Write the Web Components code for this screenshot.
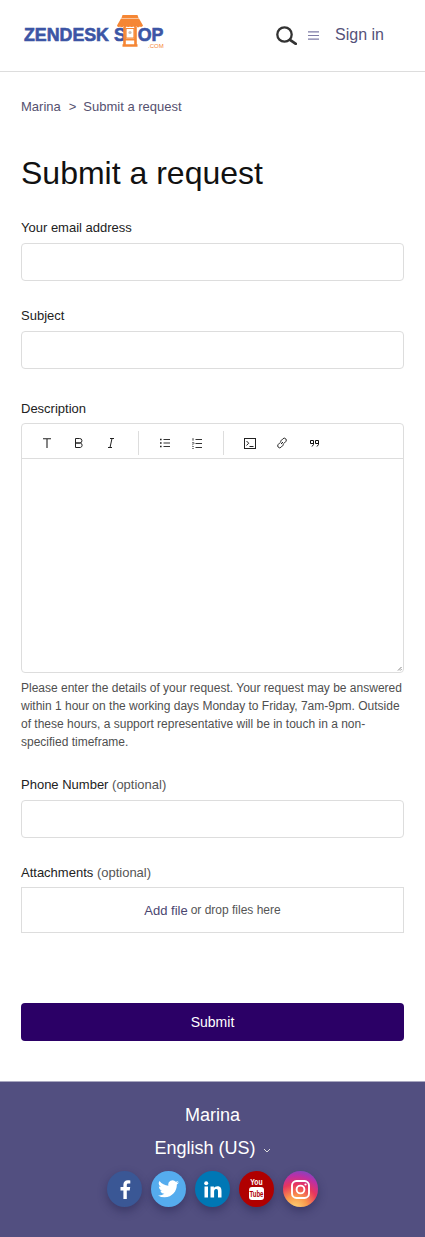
<!DOCTYPE html>
<html lang="en"><head><meta charset="utf-8"><title>Submit a request</title>
<style>
html,body{margin:0;padding:0;background:#fff}
body{font-family:"Liberation Sans",Arial,sans-serif;color:#1a1a1a;width:425px;height:1237px;overflow:hidden}
</style></head><body>
<site-header></site-header>
<main-area>
  <bread-crumbs></bread-crumbs>
  <h-title>Submit a request</h-title>
  <form-field label="Your email address" style="margin-top:25px"></form-field>
  <form-field label="Subject" style="margin-top:27px"></form-field>
  <rich-editor style="margin-top:32px"></rich-editor>
  <form-field label="Phone Number" optional style="margin-top:26px"></form-field>
  <attach-field style="margin-top:27px"></attach-field>
  <submit-button style="margin-top:70px"></submit-button>
</main-area>
<site-footer></site-footer>
<script>
function def(name,html){customElements.define(name,class extends HTMLElement{constructor(){super();this.attachShadow({mode:'open'});}connectedCallback(){if(this._d)return;this._d=1;this.shadowRoot.innerHTML=typeof html==='function'?html(this):html;}});}
def('site-header',`<style>
:host{display:flex;align-items:center;height:71px;border-bottom:1px solid #ddd;padding-left:24px}
.logo{display:flex;align-items:center;font:700 17.800px/1 "Liberation Sans",sans-serif;color:#3c55a5;width:139px;-webkit-text-stroke:.6px #3c55a5;white-space:nowrap;position:relative;height:40px;flex:none}
.logo svg{margin:0 -5px 9px -9px;flex:none;position:relative}
.com{position:absolute;left:124px;top:27px;font:400 6px/1 "Liberation Sans",sans-serif;color:#f58634;-webkit-text-stroke:0}
.search{margin-left:113px;flex:none}
.menu{margin-left:11px;flex:none}
a{margin-left:16px;font-size:16px;color:#55527a;margin-top:-2px}
</style>
<div class="logo"><span>ZENDESK S</span><svg width="26" height="32" viewBox="0 0 26 32">
<path d="M5.500 0h15l1 3h-17z" fill="#f58634"/>
<path d="M4 3.500h18l4 7a2 2 0 0 1-3.200 1 2.400 2.400 0 0 1-3.400 0 3 3 0 0 1-3.200 0 2.800 2.800 0 0 1-3.200 0 3 3 0 0 1-3.200 0 2.400 2.400 0 0 1-3.400 0 2.400 2.400 0 0 1-3.400 0A2 2 0 0 1 0 10.500z" fill="#f58634"/>
<path d="M7.500 12v19M18.500 12v19M5.500 30.500h15" stroke="#f58634" stroke-width="2.600" fill="none"/>
<path d="M9 13.500h8v9.500H9z" fill="#fff" stroke="#f58634" stroke-width="1.200"/>
<path d="M7 24.500h12" stroke="#f58634" stroke-width="2"/>
<circle cx="13" cy="17.500" r="1.600" fill="#cdbfb5"/></svg><span>OP</span><span class="com">.COM</span></div>
<svg class="search" width="21" height="19" viewBox="0 0 21 19"><circle cx="8.500" cy="8.500" r="7.200" fill="none" stroke="#333" stroke-width="2.300"/><path d="M14 13.800l5.800 4" stroke="#333" stroke-width="2.700" stroke-linecap="round"/></svg>
<svg class="menu" width="11" height="9" viewBox="0 0 11 9"><path d="M0 .8h11M0 4.500h11M0 8.200h11" stroke="#7f7ca6" stroke-width="1.200"/></svg>
<a>Sign in</a>`);
def('main-area',`<style>:host{display:block;padding:0 21px}</style><slot></slot>`);
def('bread-crumbs',`<style>:host{display:flex;padding-top:27px;font-size:13px;line-height:16px;color:#55516f;white-space:pre}</style><span>Marina</span><span style="margin:0 7px 0 8px">&gt;</span><span>Submit a request</span>`);
def('h-title',`<style>:host{display:block;margin-top:36px;font-size:32px;line-height:44px;font-weight:400;color:#111}</style><slot></slot>`);
def('form-field',el=>`<style>:host{display:block}
label{display:block;font-size:13px;line-height:16px;color:#222;margin-bottom:7px}
.o{color:#555}
.i{height:36px;border:1px solid #ddd;border-radius:4px;background:#fff}
</style><label>${el.getAttribute('label')||''}${el.hasAttribute('optional')?' <span class="o">(optional)</span>':''}</label><div class="i"></div>`);
def('rich-editor',`<style>:host{display:block}
label{display:block;font-size:13px;line-height:16px;color:#222;margin-bottom:6px}
.box{border:1px solid #ddd;border-radius:4px;height:248px;display:flex;flex-direction:column;position:relative;background:#fff}
.tb{height:30px;padding-top:4px;border-bottom:1px solid #ddd;display:flex;align-items:center;flex:none;padding-left:9px}
.b{width:32px;height:22px;display:flex;align-items:center;justify-content:center}
.sep{width:1px;height:24px;background:#ddd;margin:0 10px}
.grip{position:absolute;right:1px;bottom:1px}
p{margin:6px 0 0;font-size:12px;line-height:18px;color:#4f4f4f}
svg{display:block}
</style><label>Description</label><div class="box"><div class="tb">
<div class="b"><svg width="8" height="10" viewBox="0 0 8 10"><path d="M0 .700h8M4 .700V10" stroke="#222" stroke-width="1.100" fill="none"/></svg></div>
<div class="b"><svg width="8" height="10" viewBox="0 0 8 10" fill="none" stroke="#222"><path d="M.500.500h4.200a2.200 2.200 0 0 1 0 4.500H.500zM.500 5h4.800a2.300 2.300 0 0 1 0 4.500H.500z"/></svg></div>
<div class="b"><svg width="6" height="10" viewBox="0 0 6 10" fill="none" stroke="#222"><path d="M2 .500h4M0 9.500h4M4 .500L2 9.500"/></svg></div>
<div class="sep" style="margin-left:11px"></div>
<div class="b"><svg width="10" height="10" viewBox="0 0 10 10" fill="none"><path d="M3.500 1.500H10M3.500 5H10M3.500 8.500H10" stroke="#333"/><path d="M0 1.500h2M0 5h2M0 8.500h2" stroke="#222" stroke-width="1.700" stroke-dasharray="1 .4"/></svg></div>
<div class="b"><svg width="10" height="11" viewBox="0 0 10 11" fill="none"><path d="M3.500 1.500H10M3.500 5.500H10M3.500 9.500H10" stroke="#333"/><path d="M0 1h2M1 .5v2.500M0 4.500h2v1.500H0v1.500M0 8.500h2M0 10.500h2" stroke="#666" stroke-width=".8"/></svg></div>
<div class="sep"></div>
<div class="b"><svg width="12" height="11" viewBox="0 0 12 11" fill="none" stroke="#222"><rect x=".5" y=".5" width="11" height="10"/><path d="M2.500 3l2.200 2.200-2.200 2.300M5.500 8.500h4"/></svg></div>
<div class="b"><svg width="12" height="12" viewBox="0 0 12 12" fill="none" stroke="#222"><path d="M5 7l2-2M4.300 5.400L2.100 7.600a2 2 0 0 0 2.800 2.800l2.200-2.200a2 2 0 0 0 0-1.500M7.700 6.600l2.200-2.200a2 2 0 0 0-2.800-2.800L4.900 3.800a2 2 0 0 0 0 1.500"/></svg></div>
<div class="b"><svg width="9" height="7" viewBox="0 0 9 7" fill="none" stroke="#111"><path d="M.5.500h3v3h-3zM3.500 1v3.500L2 6.500M5.500.500h3v3h-3zM8.500 1v3.500L7 6.500"/></svg></div>
</div>
<svg class="grip" width="5" height="5" viewBox="0 0 5 5"><path d="M4.500 1L1 4.500M4.500 3.200L3.200 4.500" stroke="#777" stroke-width=".9"/></svg></div>
<p>Please enter the details of your request. Your request may be answered within 1 hour on the working days Monday to Friday, 7am-9pm. Outside of these hours, a support representative will be in touch in a non-specified timeframe.</p>`);
def('attach-field',`<style>:host{display:block}
label{display:block;font-size:13px;line-height:16px;color:#222;margin-bottom:6px}
.o{color:#555}
.d{height:44px;border:1px solid #ddd;display:flex;align-items:center;justify-content:center;font-size:12px;color:#555}
a{color:#4b4670;font-size:13px;margin-right:3px}
</style><label>Attachments <span class="o">(optional)</span></label><div class="d"><a>Add file</a> or drop files here</div>`);
def('submit-button',`<style>:host{display:flex;height:38px;align-items:center;justify-content:center;background:#2b0066;color:#fff;border-radius:4px;font-size:14px}</style>Submit`);
const circ=(bg,inner)=>`<div class="c" style="background:${bg}">${inner}</div>`;
def('site-footer',`<style>:host{display:flex;flex-direction:column;align-items:center;margin-top:40px;height:155px;border-top:1px solid #a9a7c0;background:#524f80;color:#fff}
.n{font-size:18px;line-height:22px;margin-top:22px}
.l{font-size:18px;line-height:22px;margin-top:11px;display:flex;align-items:center}
.l svg{margin-left:7px;margin-top:4px}
.s{display:flex;gap:9px;margin-top:12px}
.c{width:35px;height:36px;border-radius:50%;display:flex;align-items:center;justify-content:center;box-shadow:0 4px 10px rgba(30,28,70,.45)}
</style><div class="n">Marina</div><div class="l">English (US)<svg width="8" height="5" viewBox="0 0 8 5"><path d="M1 1l3 3 3-3" stroke="#ddd" fill="none"/></svg></div>
<div class="s">
${circ('#3a5795','<svg width="12" height="19" viewBox="0 0 12 19"><path d="M7.800 19v-8.500h2.900l.5-3.400H7.800V5.100c0-1 .3-1.600 1.700-1.600h1.800V.4C11 .3 10 .2 8.800.2 6.200.2 4.400 1.800 4.400 4.700v2.400H1.500v3.400h2.900V19z" fill="#fff"/></svg>')}
${circ('#55acee','<svg width="21" height="18" viewBox="0 0 24 20"><path d="M24 2.400c-.9.400-1.800.7-2.800.8 1-.6 1.800-1.600 2.200-2.700-1 .6-2 1-3.100 1.200A4.900 4.900 0 0 0 11.900 6.200 14 14 0 0 1 1.700.9a4.900 4.900 0 0 0 1.500 6.600c-.8 0-1.600-.2-2.200-.6v.1c0 2.400 1.700 4.400 3.900 4.800-.7.200-1.500.2-2.200.1.600 2 2.400 3.400 4.600 3.400A9.900 9.900 0 0 1 0 17.300 14 14 0 0 0 7.500 19.500c9.100 0 14-7.500 14-14v-.6c1-.7 1.800-1.600 2.500-2.500z" fill="#fff"/></svg>')}
${circ('#0077b5','<svg width="18" height="17" viewBox="0 0 18 17"><rect x=".5" y="5.500" width="3.500" height="11" fill="#fff"/><circle cx="2.200" cy="2.200" r="2" fill="#fff"/><path d="M6.500 5.500h3.400V7c.6-1 1.900-1.800 3.500-1.800 3.400 0 4.100 2.200 4.100 5.100v6.200H14v-5.500c0-1.300 0-2.900-1.800-2.900s-2.100 1.400-2.100 2.800v5.600H6.500z" fill="#fff"/></svg>')}
${circ('#b00000','<svg width="17" height="24" viewBox="0 0 17 24"><text transform="translate(8.500 8) scale(1 1.300)" text-anchor="middle" font-family="Liberation Sans,sans-serif" font-weight="700" font-size="6.800" fill="#fff">You</text><rect x="1" y="10" width="15" height="13" rx="3" fill="#fff"/><text transform="translate(8.500 20) scale(1 1.500)" text-anchor="middle" font-family="Liberation Sans,sans-serif" font-weight="700" font-size="6" fill="#b00000">Tube</text></svg>')}
${circ('radial-gradient(circle at 35% 105%,#fdd77a 0,#fb9a4c 28%,#e8365d 55%,#bb2fa6 75%,#4f5bd5 100%)','<svg width="19" height="19" viewBox="0 0 19 19" fill="none" stroke="#fff" stroke-width="1.900"><rect x="1" y="1" width="17" height="17" rx="4.500"/><circle cx="9.500" cy="9.500" r="3.900"/><circle cx="14.500" cy="4.500" r="1.100" fill="#fff" stroke="none"/></svg>')}
</div>`);
</script>
</body></html>
